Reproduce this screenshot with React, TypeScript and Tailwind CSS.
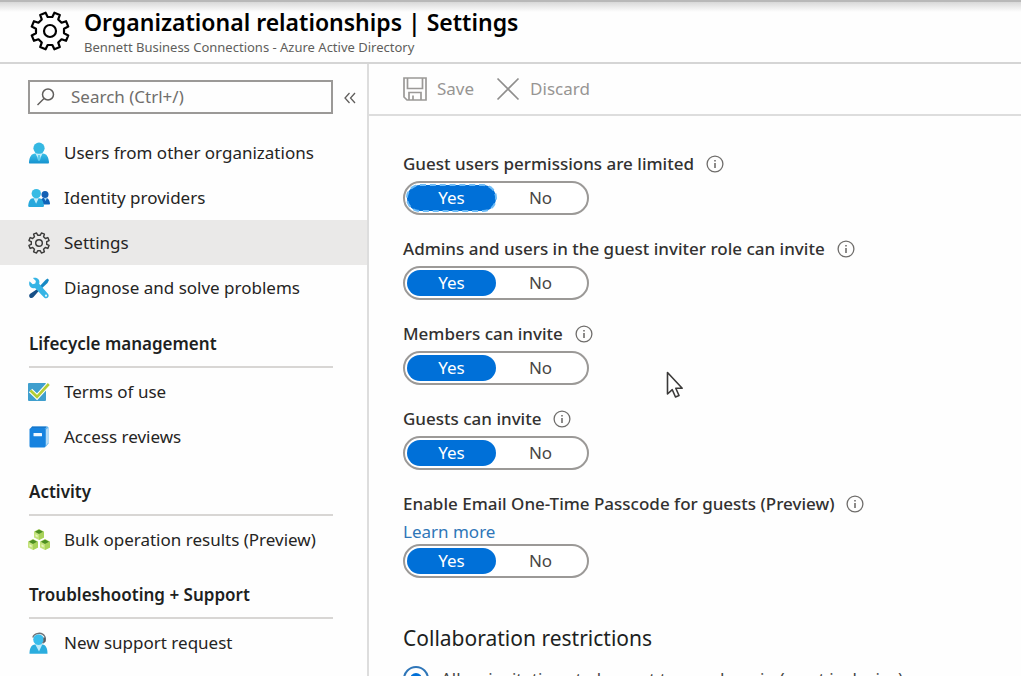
import React, { useState } from "react";

const TOOTH_ANGLES = [22.5, 67.5, 112.5, 157.5, 202.5, 247.5, 292.5, 337.5];

function gearPath(cx: number, cy: number, outer: number, inner: number) {
  const at = (r: number, deg: number) => {
    const a = ((deg - 90) * Math.PI) / 180;
    return `${(cx + r * Math.cos(a)).toFixed(2)} ${(cy + r * Math.sin(a)).toFixed(2)}`;
  };
  const points = TOOTH_ANGLES.flatMap((a) => [
    at(inner, a - 13),
    at(outer, a - 9),
    at(outer, a + 9),
    at(inner, a + 13),
  ]);
  return `M${points.join("L")}Z`;
}

function GearIcon({ className, stroke }: { className: string; stroke: number }) {
  return (
    <svg viewBox="0 0 40 40" className={className} fill="none" stroke="currentColor" strokeWidth={stroke} strokeLinejoin="round" aria-hidden="true">
      <path d={gearPath(20, 20, 18.8, 14.2)} />
      <circle cx="20" cy="20" r="6" />
    </svg>
  );
}

function UserIcon() {
  return (
    <svg viewBox="0 0 22 22" className="size-[22px]" aria-hidden="true">
      <defs>
        <linearGradient id="user" x1="0" y1="0" x2="0" y2="1">
          <stop offset="0" stopColor="#3cc0e8" />
          <stop offset="1" stopColor="#1592cf" />
        </linearGradient>
      </defs>
      <path d="M2 21.500c-.7 0-1.200-.5-1-1.500C1.500 15 3.500 11.500 7 11.500h8c3.500 0 5.500 3.500 6 8.500 0 1-.4 1.500-1 1.500Z" fill="url(#user)" />
      <path d="M7.500 11.500h7L11 19Z" fill="#c5eefb" />
      <path d="M10.200 13h1.600l.9 4L11 19l-1.700-2Z" fill="#5fcdee" />
      <circle cx="11" cy="6.200" r="5.600" fill="#35b8e2" />
    </svg>
  );
}

function UsersIcon() {
  return (
    <svg viewBox="0 0 22 22" className="size-[22px]" aria-hidden="true">
      <path d="M12 17.500c0-4 1-6.500 4-6.500h2c2.500 0 3.600 2.500 4 5.500 0 .7-.4 1-1 1Z" fill="#0f62b8" />
      <circle cx="17" cy="7.500" r="3.500" fill="#1260b4" />
      <path d="M16 11h3l-1.500 3Z" fill="#9ad7f5" />
      <path d="M1.200 20c-.8 0-1.100-.5-1-1.200C.7 14.500 2 11.300 5 11.300h6c3 0 4.500 3.200 5 7.500 0 .7-.3 1.200-1 1.200Z" fill="#27a8dc" />
      <path d="M5.500 11.300h5.200l-2.600 5.500Z" fill="#c5eefb" />
      <circle cx="8.300" cy="6.600" r="4.700" fill="#37bbe4" />
    </svg>
  );
}

function ToolsIcon() {
  return (
    <svg viewBox="0 0 22 22" className="size-[22px]" aria-hidden="true">
      <path d="M19.500 1.500 21 3l-1.500 3-8 7.500-2-2L17.500 3Z" fill="#1689c4" />
      <path d="m11.500 10.500 1.200 1.300L5.500 20c-1 1.200-2.700 1.400-3.700.4s-.8-2.700.4-3.700Z" fill="#174f86" />
      <path d="M1.500 4.200 4.700 7.300l2.600-.7.600-2.600L4.900 1C7 .2 9.400.7 10.600 2.400c1 1.400 1 3 .5 4.400l8.800 9.900c1.200 1.300.9 3 0 3.900s-2.600 1-3.800-.2L7 11c-1.600.6-3.300.2-4.500-1C1 8.500.800 6.200 1.500 4.200Z" fill="#35b4e5" />
      <circle cx="18" cy="18.700" r="1.100" fill="#e7f8ff" />
    </svg>
  );
}

function TermsIcon() {
  return (
    <svg viewBox="0 0 22 22" className="size-[22px]" aria-hidden="true">
      <rect x="0" y="2" width="18" height="18" rx="1" fill="#3f9fce" />
      <path d="M2.500 9.500 9 15.800 20.300 3.500" fill="none" stroke="#fff" strokeWidth="4.800" />
      <path d="M2.500 9.500 9 15.800 20.800 3" fill="none" stroke="#b3cd35" strokeWidth="2.600" />
    </svg>
  );
}

function BookIcon() {
  return (
    <svg viewBox="0 0 22 22" className="size-[22px]" aria-hidden="true">
      <path d="M4 .5h15c1 0 1.500.5 1.500 1.500v15.500l-2.500 3H3Z" fill="#65b5ee" />
      <path d="M4 .5h15.500c-1 0-1.800.5-1.800 1.800H2.500Z" fill="#1976c9" />
      <path d="M18 3.500 20 2v15l-2 2.500Z" fill="#b6dcf7" />
      <rect x="1.500" y="2" width="16" height="19.500" rx="1.500" fill="#1783df" />
      <rect x="5.500" y="7" width="8.500" height="3.300" rx=".5" fill="#f2f9ff" />
    </svg>
  );
}

function Cube({ x, y }: { x: number; y: number }) {
  return (
    <g transform={`translate(${x} ${y})`}>
      <path d="M0 2.600 5 0l5 2.600v5.800L5 11 0 8.400Z" fill="#c3e27c" />
      <path d="M5 5.200 10 2.600v5.800L5 11Z" fill="#a9d35a" />
      <path d="M.8 2.700 5 .5l4.200 2.200L5 4.900Z" fill="#4d8f22" />
      <path d="M1.500 5.200 3.600 6.300v2L1.500 7.200Z" fill="#e9f7bd" />
    </g>
  );
}

function CubesIcon() {
  return (
    <svg viewBox="0 0 22 22" className="size-[22px]" aria-hidden="true">
      <Cube x={6} y={0} />
      <Cube x={0} y={10} />
      <Cube x={12} y={10} />
    </svg>
  );
}

function SupportIcon() {
  return (
    <svg viewBox="0 0 22 22" className="size-[22px]" aria-hidden="true">
      <path d="M1.500 21.800C1.500 16.500 3.300 12.500 7 12.500h7.500c3.300 0 5 4 5 9.300Z" fill="#2badde" />
      <path d="M7.300 12.500h7L11 19.500Z" fill="#bdebfa" />
      <circle cx="10.500" cy="7.600" r="5.300" fill="#37bdec" />
      <path d="M4.800 5.500C6 1 14 -.8 16.800 4.500c1 2.500.6 5.300-2.300 6.700" fill="none" stroke="#6c7378" strokeWidth="1.300" />
      <path d="M16.300 5.500v4.500" stroke="#565d62" strokeWidth="2" />
    </svg>
  );
}

function InfoIcon() {
  return (
    <svg viewBox="0 0 18 18" className="size-[18px]" fill="none" stroke="#6f6d6b" aria-hidden="true">
      <circle cx="9" cy="9" r="7.900" strokeWidth="1.300" />
      <path d="M9 8v5M9 5v1.600" strokeWidth="1.600" />
    </svg>
  );
}

function NavItem({ icon, label, active = false }: { icon: React.ReactNode; label: string; active?: boolean }) {
  return (
    <li>
      <a
        href="#"
        aria-current={active ? "page" : undefined}
        className={`flex h-[45px] items-center gap-[14px] pl-7 text-[17px] text-[#252423] ${active ? "bg-[#eae9e8]" : ""}`}
      >
        <span className="flex size-[22px] shrink-0 items-center justify-center">{icon}</span>
        <span className="whitespace-nowrap">{label}</span>
      </a>
    </li>
  );
}

function NavSection({ title, children }: { title: string; children: React.ReactNode }) {
  return (
    <section>
      <div className="mb-px ml-[29px] mr-[34px] flex h-[57px] items-center border-b-2 border-[#d8d6d4] pt-[10px]">
        <h2 className="text-[17px] font-semibold leading-6 text-[#201f1e]">{title}</h2>
      </div>
      <ul>{children}</ul>
    </section>
  );
}

function Setting({ label, link, focused = false }: { label: string; link?: string; focused?: boolean }) {
  const [value, setValue] = useState("Yes");
  return (
    <div role="group" aria-label={label} className="flex flex-col items-start">
      <div className="mb-[2px] flex h-[30px] items-center gap-3">
        <span className="whitespace-nowrap text-[17px] font-medium text-[#323130]">{label}</span>
        <button type="button" aria-label={`About: ${label}`}>
          <InfoIcon />
        </button>
      </div>
      {link && (
        <a href="#" className="-mt-[2px] h-[25px] text-[17px] leading-[25px] text-[#2f76b8]">
          {link}
        </a>
      )}
      <div className="flex h-[34px] w-[186px] rounded-full border-2 border-[#9b9997] bg-white p-[2px]">
        {["Yes", "No"].map((option) => (
          <button
            key={option}
            type="button"
            aria-pressed={value === option}
            onClick={() => setValue(option)}
            className={`flex-1 rounded-full text-[17px] leading-[24px] ${
              value === option ? "bg-[#0070d8] text-white" : "text-[#484644]"
            } ${focused && value === option ? "outline-2 -outline-offset-1 outline-dashed outline-[#6dbcf7]" : ""}`}
          >
            {option}
          </button>
        ))}
      </div>
    </div>
  );
}

export default function App() {
  return (
    <div className="flex h-screen flex-col overflow-hidden bg-[#fefefe] font-['Noto_Sans','Open_Sans',sans-serif]">
      <div className="-mb-3 h-3 shrink-0 border-t-2 border-[#b8b8b8] bg-linear-to-b from-[#d8d8d8] to-[#fefefe]" />
      <header className="z-10 flex h-16 shrink-0 items-center gap-[14px] border-b-2 border-[#d5d5d5] pl-[30px]">
        <GearIcon className="size-[40px] text-black" stroke={2.2} />
        <div>
          <h1 className="whitespace-nowrap text-[23px] font-semibold leading-[32px] text-black">
            Organizational relationships | Settings
          </h1>
          <p className="text-[13px] leading-[18px] text-[#605e5c]">Bennett Business Connections - Azure Active Directory</p>
        </div>
      </header>

      <div className="flex min-h-0 flex-1">
        <aside className="w-[369px] shrink-0 border-r-2 border-[#dddddd]">
          <div className="flex h-[66px] items-center gap-[10px] pl-7">
            <label className="flex h-[34px] w-[305px] items-center gap-3 border-2 border-[#9b9997] pl-[6px]">
              <svg viewBox="0 0 20 20" className="size-5 shrink-0" fill="none" stroke="#605e5c" strokeWidth="1.500" aria-hidden="true">
                <circle cx="12" cy="7.500" r="5.500" />
                <path d="M8 11.500 1.500 18" />
              </svg>
              <input
                type="search"
                aria-label="Search"
                placeholder="Search (Ctrl+/)"
                className="w-full min-w-0 bg-transparent pl-[3px] text-[17px] text-[#605e5c] outline-none placeholder:text-[#706e6c]"
              />
            </label>
            <button type="button" aria-label="Collapse menu" className="pt-[2px]">
              <svg viewBox="0 0 14 14" className="size-[14px]" fill="none" stroke="#605e5c" strokeWidth="1.300" aria-hidden="true">
                <path d="M6.500 2 2 7l4.500 5M12 2 7.500 7l4.500 5" />
              </svg>
            </button>
          </div>
          <nav aria-label="Organizational relationships">
            <ul className="mb-px">
              <NavItem icon={<UserIcon />} label="Users from other organizations" />
              <NavItem icon={<UsersIcon />} label="Identity providers" />
              <NavItem icon={<GearIcon className="size-[22px] text-[#3b3a39]" stroke={2.6} />} label="Settings" active />
              <NavItem icon={<ToolsIcon />} label="Diagnose and solve problems" />
            </ul>
            <NavSection title="Lifecycle management">
              <NavItem icon={<TermsIcon />} label="Terms of use" />
              <NavItem icon={<BookIcon />} label="Access reviews" />
            </NavSection>
            <NavSection title="Activity">
              <NavItem icon={<CubesIcon />} label="Bulk operation results (Preview)" />
            </NavSection>
            <NavSection title="Troubleshooting + Support">
              <NavItem icon={<SupportIcon />} label="New support request" />
            </NavSection>
          </nav>
        </aside>

        <main className="min-w-0 flex-1">
          <div className="flex h-[52px] items-center gap-[22px] border-b-2 border-[#dddddd] pl-[34px] text-[17px] text-[#979593]">
            <button type="button" className="flex items-center gap-[10px]">
              <svg viewBox="0 0 24 24" className="size-6" fill="none" stroke="#9b9997" strokeWidth="1.700" aria-hidden="true">
                <path d="M1 1h22v22H4l-3-3ZM4.500 1v10.500h15V1M6 23v-7.500h12V23M10 23v-4.500" />
              </svg>
              Save
            </button>
            <button type="button" className="flex items-center gap-[10px]">
              <svg viewBox="0 0 24 24" className="size-6" fill="none" stroke="#8f8e8d" strokeWidth="1.700" aria-hidden="true">
                <path d="m1.500 1.500 21 21M22.500 1.500l-21 21" />
              </svg>
              Discard
            </button>
          </div>
          <div className="flex flex-col gap-[19px] pl-[34px] pt-[33px]">
            <Setting label="Guest users permissions are limited" focused />
            <Setting label="Admins and users in the guest inviter role can invite" />
            <Setting label="Members can invite" />
            <Setting label="Guests can invite" />
            <Setting label="Enable Email One-Time Passcode for guests (Preview)" link="Learn more" />
          </div>
          <section className="pl-[34px] pt-[44px]">
            <h2 className="text-[21px] leading-[32px] text-[#201f1e]">Collaboration restrictions</h2>
            <label className="mt-3 flex h-[26px] items-center gap-3 text-[17px] text-[#484644]">
              <input
                type="radio"
                name="restrictions"
                defaultChecked
                className="size-[26px] shrink-0 appearance-none rounded-full border-2 border-[#2f76b8] bg-[#0070d8] bg-clip-content p-[5px]"
              />
              <span className="whitespace-nowrap">Allow invitations to be sent to any domain (most inclusive)</span>
            </label>
          </section>
        </main>
      </div>

      <svg viewBox="0 0 18 28" className="pointer-events-none absolute left-[666px] top-[371px] h-7 w-[18px]" aria-hidden="true">
        <path d="M1.500 1.500v21.500l4.800-4.300 3.200 7.300 3.500-1.500-3.200-7.200h6.400Z" fill="#fff" stroke="#3b3a39" strokeWidth="1.600" strokeLinejoin="round" />
      </svg>
    </div>
  );
}
